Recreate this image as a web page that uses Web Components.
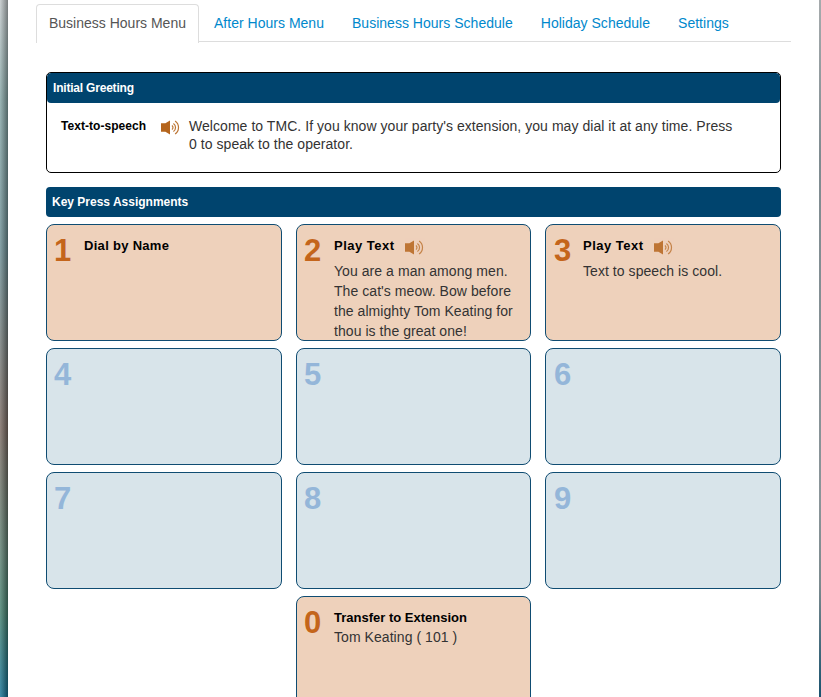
<!DOCTYPE html>
<html>
<head>
<meta charset="utf-8">
<title>Auto Attendant</title>
<style>
    html, body { margin: 0; height: 100%; overflow: hidden; background: #fff; }
    body { font-family: "Liberation Sans", Arial, sans-serif; font-size: 14px; color: #333; }
</style>
</head>
<body>
<template id="speaker-tpl">
    <style>
        :host { display: inline-block; width: 19px; height: 15px; }
        svg { display: block; width: 19px; height: 15px; }
    </style>
    <svg viewBox="0 0 19 15" fill="none">
        <path d="M0 3.2h4.4L9 .4v14.2L4.4 11.8H0z" fill="#b5651d"/>
        <path d="M10.9 5.45a2.5 2.5 0 0 1 0 4.1M12.4 3.4a5 5 0 0 1 0 8.2M14.1 .95a8 8 0 0 1 0 13.1" stroke="#bd7635" stroke-width="1.2"/>
    </svg>
</template>

<script>
    class SpeakerIcon extends HTMLElement {
        constructor() {
            super();
            this.attachShadow({ mode: 'open' });
            this.shadowRoot.appendChild(document.getElementById('speaker-tpl').content.cloneNode(true));
        }
    }
    customElements.define('speaker-icon', SpeakerIcon);

    class AppFrame extends HTMLElement {
        constructor() {
            super();
            this.attachShadow({ mode: 'open' });
            this.shadowRoot.innerHTML = `
            <style>
                :host {
                    display: grid;
                    grid-template-columns: 8px 1fr 2px;
                    height: 697px;
                    overflow: hidden;
                    background: #fff;
                }
                .left {
                    background:
                        linear-gradient(90deg, rgba(255,255,255,.18), rgba(0,0,0,.38)),
                        linear-gradient(180deg, #c2c8ca 0%, #86a6a6 14%, #6c8e94 35%, #7a6a62 60%, #5d8072 78%, #44806e 86%, #0a6f9c 100%);
                }
                .right {
                    background: linear-gradient(180deg, #a6abad 0%, #7f8b90 22%, #8b9599 70%, #7c8a8e 82%, #0a4a6a 100%);
                }
                .page { padding: 4px 28px 0 28px; min-width: 0; }
            </style>
            <div class="left"></div>
            <div class="page"><slot></slot></div>
            <div class="right"></div>
            `;
        }
    }
    customElements.define('app-frame', AppFrame);

    class TabBar extends HTMLElement {
        constructor() {
            super();
            this.attachShadow({ mode: 'open' });
            this.shadowRoot.innerHTML = `
            <style>
                :host { display: flex; height: 37px; border-bottom: 1px solid #ddd; }
            </style>
            <slot></slot>
            `;
        }
    }
    customElements.define('tab-bar', TabBar);

    class TabItem extends HTMLElement {
        constructor() {
            super();
            this.attachShadow({ mode: 'open' });
            this.shadowRoot.innerHTML = `
            <style>
                :host {
                    display: block;
                    height: 36px;
                    padding: 1px 12px 0;
                    margin-right: 2px;
                    border: 1px solid transparent;
                    border-bottom: 0;
                    border-radius: 4px 4px 0 0;
                    font-size: 14px;
                    line-height: 35px;
                    letter-spacing: .02px;
                    color: #0088cc;
                }
                :host([active]) {
                    color: #555;
                    background: #fff;
                    border-color: #ddd;
                    height: 37px;
                    letter-spacing: 0;
                }
            </style>
            <slot></slot>
            `;
        }
    }
    customElements.define('tab-item', TabItem);

    class GreetingPanel extends HTMLElement {
        constructor() {
            super();
            this.attachShadow({ mode: 'open' });
            this.shadowRoot.innerHTML = `
            <style>
                :host {
                    display: block;
                    margin: 30px 10px 14px;
                    border: 1px solid #000;
                    border-radius: 5px;
                    overflow: hidden;
                }
                .head {
                    height: 30px;
                    line-height: 30px;
                    padding: 0 6px;
                    background: #00446e;
                    color: #fff;
                    font-size: 12px;
                    font-weight: bold;
                    letter-spacing: -.2px;
                    border-radius: 4px;
                }
                .body {
                    display: grid;
                    grid-template-columns: 100px 28px 1fr;
                    padding: 14px 46px 19px 14px;
                    line-height: 18px;
                    letter-spacing: .05px;
                }
                .label { font-size: 12px; font-weight: bold; color: #000; letter-spacing: .05px; }
                .icon { padding-top: 3px; }
            </style>
            <div class="head"><slot name="title"></slot></div>
            <div class="body">
                <div class="label"><slot name="label"></slot></div>
                <div class="icon"><speaker-icon></speaker-icon></div>
                <div><slot></slot></div>
            </div>
            `;
        }
    }
    customElements.define('greeting-panel', GreetingPanel);

    class SectionBar extends HTMLElement {
        constructor() {
            super();
            this.attachShadow({ mode: 'open' });
            this.shadowRoot.innerHTML = `
            <style>
                :host {
                    display: block;
                    margin: 0 10px 7px;
                    height: 30px;
                    line-height: 30px;
                    padding: 0 6px;
                    background: #00446e;
                    color: #fff;
                    font-size: 12px;
                    font-weight: bold;
                    border-radius: 4px;
                }
            </style>
            <slot></slot>
            `;
        }
    }
    customElements.define('section-bar', SectionBar);

    class KeyGrid extends HTMLElement {
        constructor() {
            super();
            this.attachShadow({ mode: 'open' });
            this.shadowRoot.innerHTML = `
            <style>
                :host {
                    display: grid;
                    grid-template-columns: 236px 235px 236px;
                    column-gap: 14px;
                    row-gap: 7px;
                    grid-auto-rows: 117px;
                    margin: 0 10px;
                }
            </style>
            <slot></slot>
            `;
        }
    }
    customElements.define('key-grid', KeyGrid);

    class KeyCard extends HTMLElement {
        constructor() {
            super();
            this.attachShadow({ mode: 'open' });
            this.shadowRoot.innerHTML = `
            <style>
                :host {
                    display: grid;
                    grid-template-columns: 30px 1fr;
                    align-content: start;
                    box-sizing: border-box;
                    padding: 10px 12px 0 7px;
                    border: 1px solid #0f4c72;
                    border-radius: 8px;
                    background: #d8e4ea;
                    overflow: hidden;
                    line-height: 20px;
                    letter-spacing: .06px;
                }
                :host([assigned]) { background: #eed1bb; }
                .num {
                    font-size: 31px;
                    line-height: 32px;
                    font-weight: bold;
                    letter-spacing: 0;
                    padding-left: var(--num-indent, 0);
                    color: #94b6d9;
                }
                :host([assigned]) .num { color: #c4651b; }
                .title {
                    padding-top: 1px;
                    margin-bottom: -1px;
                    font-size: 13px;
                    font-weight: bold;
                    color: #000;
                }
                ::slotted([slot="title"]) { letter-spacing: var(--title-spacing, 0); }
            </style>
            <div class="num"><slot name="key"></slot></div>
            <div>
                <div class="title"><slot name="title"></slot></div>
                <div class="text"><slot></slot></div>
            </div>
            `;
        }
    }
    customElements.define('key-card', KeyCard);

    // icon next to a card title: sits low and makes the title line 6px taller
    class CardIcon extends SpeakerIcon {
        connectedCallback() {
            this.style.cssText = 'margin: 0 0 7px 10px; vertical-align: -11.5px; opacity: .85;';
        }
    }
    customElements.define('card-icon', CardIcon);
</script>

<app-frame>
    <tab-bar>
        <tab-item active>Business Hours Menu</tab-item>
        <tab-item>After Hours Menu</tab-item>
        <tab-item>Business Hours Schedule</tab-item>
        <tab-item>Holiday Schedule</tab-item>
        <tab-item>Settings</tab-item>
    </tab-bar>

    <greeting-panel>
        <span slot="title">Initial Greeting</span>
        <span slot="label">Text-to-speech</span>
        Welcome to TMC. If you know your party's extension, you may dial it at any time. Press 0 to speak to the operator.
    </greeting-panel>

    <section-bar>Key Press Assignments</section-bar>

    <key-grid>
        <key-card assigned style="--title-spacing: .3px"><span slot="key">1</span><span slot="title">Dial by Name</span></key-card>
        <key-card assigned style="--title-spacing: .5px"><span slot="key">2</span><span slot="title">Play Text<card-icon></card-icon></span>You are a man among men. The cat's meow. Bow before the almighty Tom Keating for thou is the great one!</key-card>
        <key-card assigned style="--title-spacing: .5px; --num-indent: 1px"><span slot="key">3</span><span slot="title">Play Text<card-icon></card-icon></span>Text to speech is cool.</key-card>
        <key-card><span slot="key">4</span></key-card>
        <key-card><span slot="key">5</span></key-card>
        <key-card style="--num-indent: 1px"><span slot="key">6</span></key-card>
        <key-card><span slot="key">7</span></key-card>
        <key-card><span slot="key">8</span></key-card>
        <key-card style="--num-indent: 1px"><span slot="key">9</span></key-card>
        <key-card assigned style="grid-column: 2"><span slot="key">0</span><span slot="title">Transfer to Extension</span>Tom Keating ( 101 )</key-card>
    </key-grid>
</app-frame>
</body>
</html>
